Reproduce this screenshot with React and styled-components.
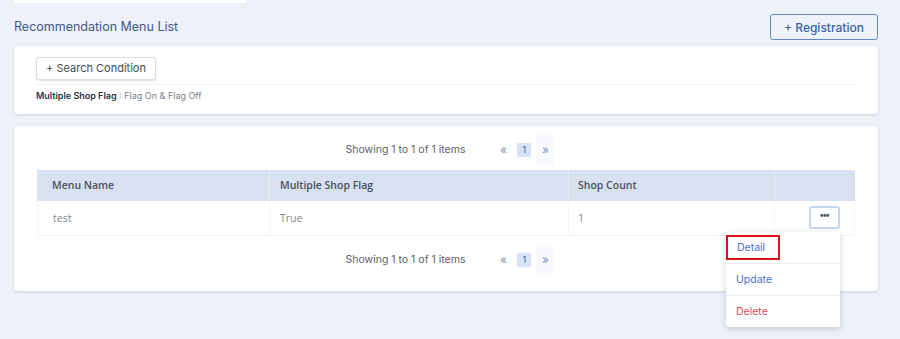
import React from 'react';
import styled, { createGlobalStyle } from 'styled-components';

const GlobalStyle = createGlobalStyle`
  html, body {
    margin: 0;
    padding: 0;
    background: #eef1f8;
  }
  body {
    font-family: Inter, "Open Sans", sans-serif;
  }
`;

const Page = styled.div`
  width: 900px;
  height: 339px;
  box-sizing: border-box;
  padding: 0 22px 0 14px;
  background: #eef1f8;
  overflow: hidden;
`;

const TopStrip = styled.div`
  width: 232px;
  height: 3px;
  background: #ffffff;
`;

const Header = styled.div`
  display: flex;
  align-items: flex-start;
  justify-content: space-between;
  height: 43px;
  box-sizing: border-box;
  padding-top: 11px;
`;

const Title = styled.h1`
  margin: 4px 0 0;
  font-size: 12.5px;
  line-height: 18px;
  font-weight: 400;
  color: #42598a;
`;

const RegisterButton = styled.button`
  height: 26px;
  width: 108px;
  border: 1px solid #6487c6;
  border-radius: 3px;
  background: #eef3fa;
  color: #3b5fa6;
  font-family: Inter, sans-serif;
  font-size: 12px;
  font-weight: 500;
  padding: 0;
`;

const Card = styled.div`
  background: #ffffff;
  border-radius: 4px;
  box-shadow: 0 1px 3px rgba(60, 80, 120, 0.18);
  padding: ${p => p.$pad};
  margin-bottom: ${p => p.$mb || '0'};
`;

const SearchButton = styled.button`
  height: 23px;
  width: 120px;
  padding: 0;
  border: 1px solid #d9dde5;
  border-radius: 3px;
  background: #ffffff;
  color: #444c58;
  font-family: Inter, sans-serif;
  font-size: 11px;
  box-shadow: 0 1px 2px rgba(0, 0, 0, 0.12);
`;

const Divider = styled.div`
  height: 1px;
  background: #f1f2f5;
  margin: 4px 0 5px;
`;

const FilterText = styled.div`
  font-size: 9px;
  color: #7a7f88;
  line-height: 12px;
  b {
    font-weight: 600;
    color: #2e333b;
  }
`;

const Pager = styled.div`
  display: flex;
  align-items: center;
  justify-content: center;
  height: ${p => p.$h};
  margin-bottom: ${p => p.$mb || '0'};
  padding-left: 8px;
  font-size: 10.5px;
  color: #5b606a;
`;

const PagerInfo = styled.span`
  margin-right: 29px;
`;

const PageArrow = styled.span`
  display: flex;
  align-items: center;
  justify-content: center;
  width: 18px;
  height: 30px;
  color: #8592aa;
  font-size: 12px;
  background: ${p => (p.$shade ? '#f7f9fc' : 'transparent')};
`;

const PageNum = styled.span`
  display: flex;
  align-items: center;
  justify-content: center;
  width: 14px;
  height: 14px;
  margin: 0 5px;
  background: #d6e4f6;
  color: #3b5fa6;
  font-size: 9px;
  border-radius: 1px;
`;

const Table = styled.div`
  display: grid;
  grid-template-columns: 232px 299px 206px 81px;
  font-family: "Open Sans", sans-serif;
  font-size: 10.5px;
`;

const HeadCell = styled.div`
  height: 31px;
  display: flex;
  align-items: center;
  padding-left: ${p => p.$pl || '15px'};
  background: #d7e1ef;
  color: #4a5160;
  font-weight: 600;
  border-left: ${p => (p.$first ? 'none' : '1px solid #e8edf5')};
`;

const BodyCell = styled.div`
  height: 34px;
  display: flex;
  align-items: center;
  justify-content: ${p => (p.$end ? 'flex-end' : 'flex-start')};
  padding-left: ${p => p.$pl || '15px'};
  padding-right: ${p => (p.$end ? '14px' : '0')};
  color: #80858e;
  border-bottom: 1px solid #f0f2f6;
  border-left: 1px solid #f3f5f8;
  border-right: ${p => (p.$end ? '1px solid #f3f5f8' : 'none')};
  position: relative;
`;

const DotsButton = styled.button`
  width: 31px;
  height: 23px;
  border: 2px solid #c9d5f0;
  border-radius: 3px;
  background: #ffffff;
  color: #555b66;
  font-size: 10px;
  font-weight: 700;
  line-height: 8px;
  padding: 0 0 4px;
  letter-spacing: -0.5px;
`;

const Menu = styled.div`
  position: absolute;
  top: 31px;
  right: 14px;
  width: 114px;
  background: #ffffff;
  border-radius: 3px;
  box-shadow: 0 2px 6px rgba(40, 60, 100, 0.22);
  z-index: 2;
`;

const MenuItem = styled.div`
  height: 31px;
  display: flex;
  align-items: center;
  padding-left: 10px;
  font-family: Inter, sans-serif;
  font-size: 10.5px;
  color: ${p => p.$tone};
  border-top: ${p => (p.$first ? 'none' : '1px solid #eceef2')};
`;

const Highlight = styled.span`
  display: inline-flex;
  align-items: center;
  height: 21px;
  margin-left: -10px;
  padding: 0 9px;
  width: 32px;
  border: 2px solid #d3141b;
`;

const Pagination = ({ h, mb }) => (
  <Pager $h={h} $mb={mb}>
    <PagerInfo>Showing 1 to 1 of 1 items</PagerInfo>
    <PageArrow>«</PageArrow>
    <PageNum>1</PageNum>
    <PageArrow $shade>»</PageArrow>
  </Pager>
);

const App = () => {
  return (
    <>
      <GlobalStyle />
      <Page>
        <TopStrip />
        <Header>
          <Title>Recommendation Menu List</Title>
          <RegisterButton>+ Registration</RegisterButton>
        </Header>
        <Card $pad="10px 22px 12px" $mb="12px">
          <SearchButton>+ Search Condition</SearchButton>
          <Divider />
          <FilterText>
            <b>Multiple Shop Flag</b> : Flag On &amp; Flag Off
          </FilterText>
        </Card>
        <Card $pad="6px 23px 7px">
          <Pagination h="36px" mb="2px" />
          <Table>
            <HeadCell $first>Menu Name</HeadCell>
            <HeadCell $pl="10px">Multiple Shop Flag</HeadCell>
            <HeadCell $pl="9px">Shop Count</HeadCell>
            <HeadCell />
            <BodyCell>test</BodyCell>
            <BodyCell $pl="10px">True</BodyCell>
            <BodyCell $pl="9px">1</BodyCell>
            <BodyCell $end>
              <DotsButton>•••</DotsButton>
              <Menu>
                <MenuItem $first $tone="#4a6fc4">
                  <Highlight>Detail</Highlight>
                </MenuItem>
                <MenuItem $tone="#4a6fc4">Update</MenuItem>
                <MenuItem $tone="#d9475a">Delete</MenuItem>
              </Menu>
            </BodyCell>
          </Table>
          <Pagination h="48px" />
        </Card>
      </Page>
    </>
  );
};

export default App;
